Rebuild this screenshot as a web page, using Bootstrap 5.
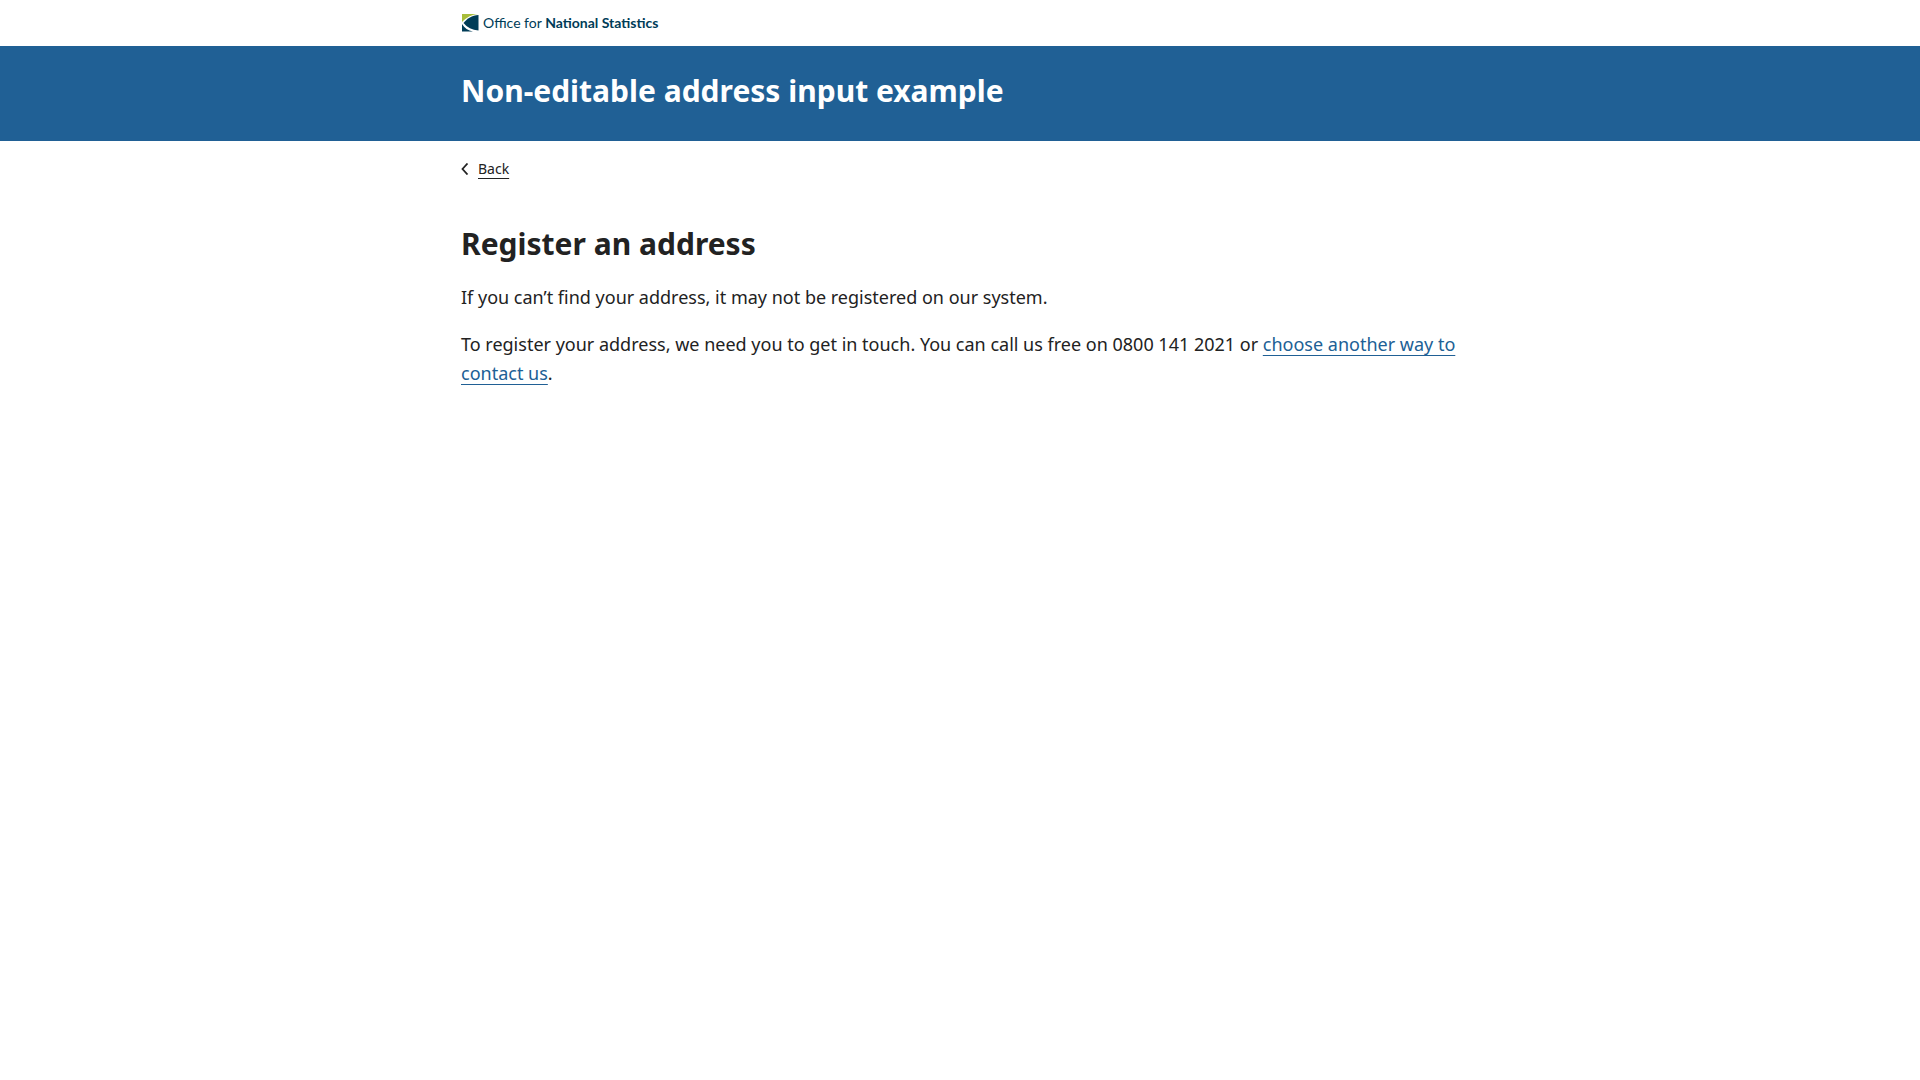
<!DOCTYPE html>
<html lang="en">
<head>
<meta charset="utf-8">
<meta name="viewport" content="width=device-width, initial-scale=1">
<title>Non-editable address input example</title>
<link href="https://cdn.jsdelivr.net/npm/bootstrap@5.3.0/dist/css/bootstrap.min.css" rel="stylesheet">
<style>
  body { font-family: "Noto Sans", sans-serif; font-size: 18px; line-height: 29px; color: #222; }
  .page-width { max-width: 1030px; padding-left: 16px; padding-right: 16px; }
  .brand-bar { padding: 14px 0; }
  .brand-link { height: 18px; gap: 4px; color: #003c57; font: 14px/18px Lato, sans-serif; text-decoration: none; }
  .title-band { background: #206095; color: #fff; padding: 24px 0 29px; }
  .heading { font-size: 30px; line-height: 42px; font-weight: 700; margin: 0; }
  .crumb { padding: 16px 0; font-size: 14px; line-height: 24px; }
  .crumb a { color: #222; gap: 9px; text-decoration: none; }
  .crumb span { text-decoration: underline; text-decoration-thickness: 1px; text-underline-offset: 4px; }
  .content-area { padding-top: 26px; }
  .content-area .heading { margin-bottom: 18px; }
  .content-area p { margin-bottom: 18px; }
  .text-link { color: #206095; text-decoration: underline; text-decoration-thickness: 1px; text-underline-offset: 4px; text-decoration-skip-ink: none; }
</style>
<script src="https://cdn.jsdelivr.net/npm/bootstrap@5.3.0/dist/js/bootstrap.bundle.min.js" defer></script>
</head>
<body>
<header>
  <div class="brand-bar">
    <div class="container-fluid page-width d-flex">
      <a class="brand-link d-inline-flex align-items-center" href="#">
        <svg width="18" height="18" viewBox="0 0 18 18" aria-hidden="true">
          <path fill="#a8bd3a" d="M1 0h16C11 .5 6 3 1 8z"/>
          <path fill="#003c57" d="M17.500 1v15.500C11 16 6 13.500 2.500 9 6 4.500 11 1.500 17.500 1z"/>
          <path fill="#003c57" d="M1 10c2.500 4 6 6.500 11 7.500H1z"/>
        </svg>
        <span>Office for <strong>National Statistics</strong></span>
      </a>
    </div>
  </div>
  <div class="title-band">
    <div class="container-fluid page-width"><h2 class="heading">Non-editable address input example</h2></div>
  </div>
</header>
<div class="container-fluid page-width">
  <nav class="crumb d-flex" aria-label="Back">
    <a class="d-inline-flex align-items-center" href="#">
      <svg width="8" height="12" viewBox="0 0 8 12" fill="none" stroke="#222" stroke-width="1.800" aria-hidden="true"><path d="M6.500 .5 1.500 6l5 5.500"/></svg>
      <span>Back</span>
    </a>
  </nav>
  <main class="content-area">
    <h1 class="heading">Register an address</h1>
    <p>If you can’t find your address, it may not be registered on our system.</p>
    <p>To register your address, we need you to get in touch. You can call us free on 0800 141 2021 or <a class="text-link" href="#">choose another way to contact us</a>.</p>
  </main>
</div>
</body>
</html>
